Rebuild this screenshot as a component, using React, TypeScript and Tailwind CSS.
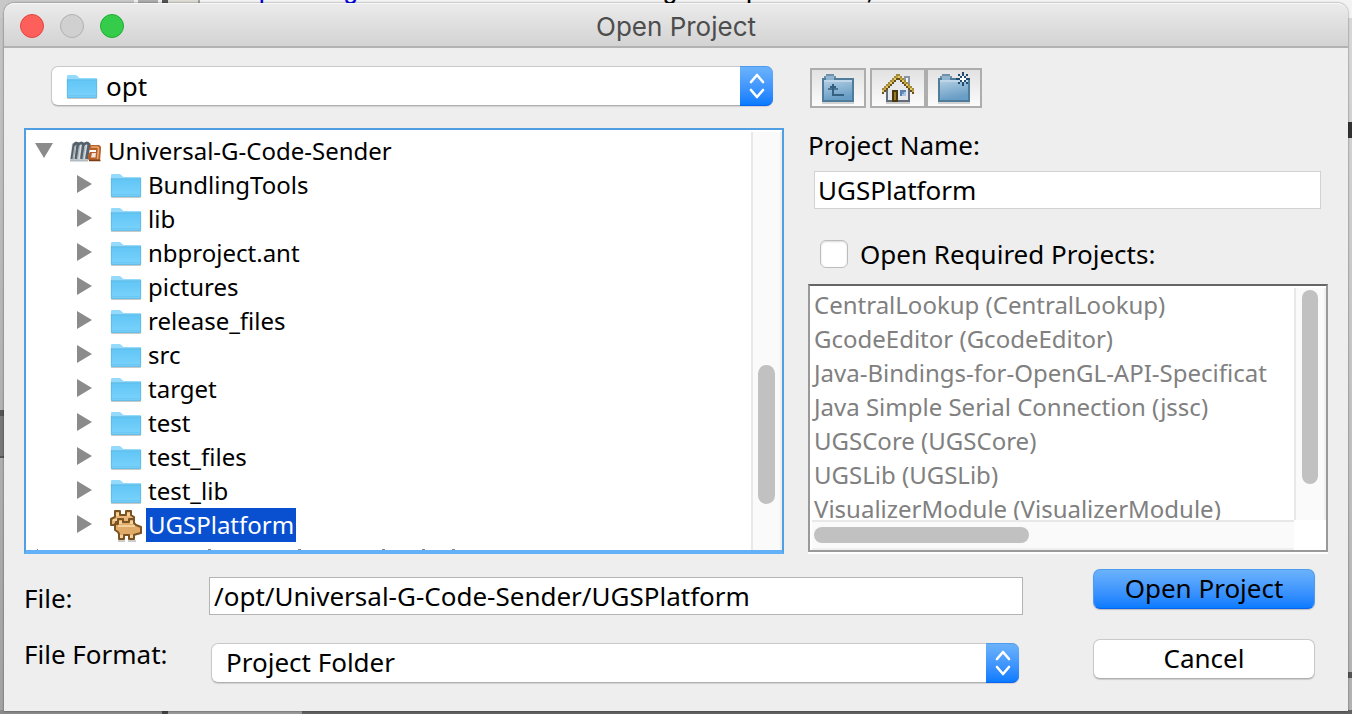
import React from "react";

const folders = [
  "BundlingTools",
  "lib",
  "nbproject.ant",
  "pictures",
  "release_files",
  "src",
  "target",
  "test",
  "test_files",
  "test_lib",
];

const requiredProjects = [
  "CentralLookup (CentralLookup)",
  "GcodeEditor (GcodeEditor)",
  "Java-Bindings-for-OpenGL-API-Specificat",
  "Java Simple Serial Connection (jssc)",
  "UGSCore (UGSCore)",
  "UGSLib (UGSLib)",
  "VisualizerModule (VisualizerModule)",
];

function FolderIcon() {
  return (
    <svg width="32" height="26" viewBox="0 0 32 26" className="block shrink-0 overflow-visible" aria-hidden="true">
      <defs>
        <linearGradient id="folderFront" x1="0" y1="0" x2="0" y2="1">
          <stop offset="0" stopColor="#62c6f5" />
          <stop offset="1" stopColor="#7ad2fc" />
        </linearGradient>
      </defs>
      <rect x="1" y="24.5" width="30" height="1.5" rx="0.75" fill="#c9c9c9" />
      <path d="M1 3.2Q1 2 2.2 2H9.2Q10.2 2 11 2.8L12.8 4.4Q13.4 5 14.4 5H30Q31 5 31 6V24Q31 25 30 25H2Q1 25 1 24Z" fill="#93dafc" />
      <path d="M1 7H31V24Q31 25 30 25H2Q1 25 1 24Z" fill="url(#folderFront)" />
      <path d="M1 6.8H31" stroke="#55b4e0" strokeWidth="0.8" />
      <path d="M1.3 6V24.4H30.7V6" fill="none" stroke="#57b5de" strokeWidth="0.7" />
      <path d="M2 22.6H30" stroke="#64bfe8" strokeWidth="0.6" />
    </svg>
  );
}

function MavenIcon() {
  return (
    <svg width="32" height="22" viewBox="0 0 32 22" className="block shrink-0 overflow-visible" aria-hidden="true">
      <path d="M0 20L2 3H20L18 20Z" fill="#d3d9dd" />
      <path d="M2 19L4 5Q6 2 8 4L6 19M8 5Q11 1.500 13.500 4.500L11.500 19M13.500 5Q16.500 1.500 19 4.500L16.500 19" fill="none" stroke="#55606a" strokeWidth="3" />
      <path d="M3 19L5 6M7.500 19L9.500 6M13 19L15 6" stroke="#aab4bc" strokeWidth="1.300" />
      <path d="M0 20.500H18" stroke="#b3babf" strokeWidth="2" />
      <path d="M20 5H29Q31.500 6 31 9L30 21H20Q17 20 18 15L20 12H26V10H19Z" fill="#b5602a" />
      <path d="M21 7H27.500Q29 8 28.500 10L27.500 19" fill="none" stroke="#eda871" strokeWidth="1.600" />
      <path d="M26 13H22L21 17.500H25.500Z" fill="#f4e3d6" />
      <path d="M19 20.500H30.500" stroke="#7b3c14" strokeWidth="1.500" />
    </svg>
  );
}

function ModuleIcon() {
  return (
    <svg width="32" height="30" viewBox="0 0 32 30" className="block shrink-0 overflow-visible" strokeLinejoin="round" aria-hidden="true">
      <path d="M8 30H15V32H8ZM18 30H26V32H18Z" fill="#cccccc" />
      <path d="M5 1H10V5H16V1H21V5L24 7V12H6V15H1V9L5 7Z" fill="#e6b577" stroke="#7a5320" strokeWidth="2" />
      <path d="M6 3H9V6H6ZM17 3H20V6H17ZM3 9H7V11H3Z" fill="#f4d09b" />
      <path d="M8 9H13V12H19V9H24V13L26 15L31 17V23L27 24L24 25V29H19V25H14V29H9V24L8 22L5 20V14H8Z" fill="#e0ab68" stroke="#7a5320" strokeWidth="2" />
      <path d="M9 11H12V14H9ZM20 11H23V14H20ZM8 15H25V17H8ZM10 25H13V28H10ZM20 25H23V28H20Z" fill="#f4d09b" />
    </svg>
  );
}

function ToolFolder({ children }: { children?: React.ReactNode }) {
  return (
    <svg width="32" height="32" viewBox="0 0 32 32" className="block" shapeRendering="crispEdges" aria-hidden="true">
      <defs>
        <linearGradient id="toolFolder" x1="0" y1="0" x2="0.300" y2="1">
          <stop offset="0" stopColor="#b4cfe4" />
          <stop offset="1" stopColor="#689dc5" />
        </linearGradient>
      </defs>
      <path d="M0 30H32V32H0Z" fill="#d2d2d2" />
      <path d="M2 4H4V2H12V4H14V8H2Z" fill="#6d91ab" />
      <path d="M4 4H12V8H4Z" fill="#93b4cf" />
      <path d="M0 6H32V30H0Z" fill="#4f7c9b" />
      <path d="M2 8H30V28H2Z" fill="url(#toolFolder)" />
      <path d="M4 6H12V8H4Z" fill="#8fb2cd" />
      <path d="M2 8H30V10H2Z" fill="#bfd6e8" />
      {children}
    </svg>
  );
}

function UpIcon() {
  return (
    <ToolFolder>
      <path d="M8 14H14V16H16V18H6V16H8Z" fill="#4a7594" />
      <path d="M10 12H12V14H14V16H12V22H22V24H10V16H8V14H10Z" fill="#36607f" />
    </ToolFolder>
  );
}

function NewFolderIcon() {
  return (
    <ToolFolder>
      <path d="M24 0H26V4H24ZM24 10H26V14H24ZM18 6H22V8H18ZM28 6H32V8H28ZM20 2H22V4H20ZM28 2H30V4H28ZM20 10H22V12H20ZM28 10H30V12H28ZM22 4H24V6H22ZM26 4H28V6H26ZM22 8H24V10H22ZM26 8H28V10H26Z" fill="#234d70" />
      <path d="M24 4H26V6H28V8H26V10H24V8H22V6H24Z" fill="#ffffff" />
    </ToolFolder>
  );
}

const roofColumns = Array.from({ length: 16 }, (_, i) => ({
  x: i * 2,
  y: 2 + 2 * (i < 8 ? 7 - i : i - 8),
  bright: i % 2 === 0,
}));

function HomeIcon() {
  return (
    <svg width="32" height="32" viewBox="0 0 32 32" className="block" shapeRendering="crispEdges" aria-hidden="true">
      <path d="M4 30H28V32H4Z" fill="#cccccc" />
      <path d="M22 4H28V16H22Z" fill="#8a94a2" />
      <path d="M24 6H26V14H24Z" fill="#f6f7f9" />
      <path d="M14 6H18V8H20V10H22V12H24V14H26V16H28V30H4V16H6V14H8V12H10V10H12V8H14Z" fill="#646c7c" />
      <path d="M14 8H18V10H20V12H22V14H24V16H26V28H6V16H8V14H10V12H12V10H14Z" fill="#e6e8ec" />
      {roofColumns.map((c) => (
        <g key={c.x}>
          <rect x={c.x} y={c.y} width="2" height="6" fill="#66511a" />
          <rect x={c.x} y={c.y + 2} width="2" height="2" fill={c.bright ? "#e0cc6c" : "#c3a643"} />
          <rect x={c.x} y={c.y} width="2" height="2" fill="#a38a3a" />
        </g>
      ))}
      <path d="M10 18H16V30H10Z" fill="#4b380c" />
      <path d="M12 20H14V28H12Z" fill="#99792c" />
      <path d="M18 18H24V24H18Z" fill="#5a80ad" />
      <path d="M20 20H24V24H20Z" fill="#a9c6e6" />
      <path d="M20 20H22V22H20Z" fill="#6f97c6" />
    </svg>
  );
}

function Stepper() {
  return (
    <span className="pointer-events-none absolute inset-y-0 right-0 flex w-[33px] items-center justify-center rounded-r-[7px] border-y border-t-[#4f9bee] border-b-[#0a63f0] bg-linear-to-b from-[#6bb2fb] to-[#067bff]">
      <svg width="18" height="28" viewBox="0 0 18 28" fill="none" stroke="#ffffff" strokeWidth="2.600" strokeLinecap="round" strokeLinejoin="round" aria-hidden="true">
        <path d="M3 10L9 3L15 10M3 18L9 25L15 18" />
      </svg>
    </span>
  );
}

function RightTriangle() {
  return (
    <svg width="15" height="20" viewBox="0 0 15 20" className="block shrink-0" aria-hidden="true">
      <path d="M0 0L15 9L0 18Z" fill="#8b8b8b" />
    </svg>
  );
}

const toolButton =
  "flex h-10 w-14 items-center justify-center border-2 border-[#adadad] bg-linear-to-b from-[#e2e2e2] to-[#fbfbfb]";
const selectBox =
  "h-10 w-full appearance-none rounded-[7px] border border-[#c9c9c9] border-b-[#b0b0b0] bg-white text-[26px] shadow-[0_1px_1px_rgba(0,0,0,0.12)] outline-none";

export default function App() {
  return (
    <div className="relative flex h-screen flex-col overflow-hidden bg-[#a8a8a8] px-1 pt-[3px] pb-[3px] font-['Noto_Sans',sans-serif] text-[26px] leading-[34px] text-black">
      <div className="absolute inset-0 flex flex-col justify-between" aria-hidden="true">
        <div className="flex h-[18px] overflow-hidden bg-[#f3f3f3]">
          <div className="w-[134px] bg-[#c8c8c8]" />
          <div className="w-7 border-x-4 border-[#eeeeee] bg-[#adadad]" />
          <div className="w-1.5 bg-[#555555]" />
          <div className="w-8 border-r-2 border-[#a2a2a2] bg-[#dcdcd4]" />
          <div className="-mt-[26px] pl-[58px] font-['Liberation_Mono',monospace] text-[28px] whitespace-nowrap text-black">
            <span className="text-[#0000e6]">package</span> com.willwinder.ugs.nbp.looku;
          </div>
        </div>
        <div className="flex flex-1 justify-between">
          <div className="flex w-1 flex-col justify-end bg-linear-to-b from-[#c4c4c4] to-[#a2a2a2]">
            <div className="mb-[252px] h-12 border-t-[6px] border-b-2 border-[#555555] bg-[#777777]" />
          </div>
          <div className="flex w-1 flex-col justify-end bg-linear-to-b from-[#d8d8d8] to-[#b2b2b2]">
            <div className="mt-[104px] mb-auto h-4 bg-[#333333]" />
            <div className="mb-8 h-[6px] bg-[#555555]" />
          </div>
        </div>
        <div className="flex h-1">
          <div className="w-[162px] bg-[#8a8a8a]" />
          <div className="w-[140px] border-l-[6px] border-[#444444] bg-[#999999]" />
          <div className="flex-1 bg-[#626262]" />
        </div>
      </div>

      <main className="relative flex min-h-0 flex-1 flex-col rounded-t-[10px] bg-[#eeeeee] shadow-[0_0_2px_rgba(0,0,0,0.6)]">
        <header className="relative flex h-[45px] shrink-0 items-center justify-center rounded-t-[10px] border-t border-b-2 border-t-[#f7f7f7] border-b-[#b2b2b2] bg-linear-to-b from-[#ebebeb] to-[#d3d3d3]">
          <div className="absolute inset-y-0 left-4 flex items-center gap-4 pt-0.5">
            <button aria-label="Close" className="size-6 rounded-full border border-[#e2463f] bg-[#fd605b]" />
            <button aria-label="Minimize" className="size-6 rounded-full border border-[#b1b1b1] bg-[#d0d0d0]" />
            <button aria-label="Zoom" className="size-6 rounded-full border border-[#1fae30] bg-[#35cc4b]" />
          </div>
          <h1 className="pt-1 font-['Inter',sans-serif] text-[26px] text-[#4d4d4d]">Open Project</h1>
        </header>

        <div className="flex min-h-0 flex-1 flex-col px-5 pt-[18px] pb-7">
          <div className="grid min-h-0 flex-1 grid-cols-[minmax(0,1fr)_520px] gap-6">
            <section className="flex min-h-0 flex-col">
              <div className="relative mr-[11px] mb-[22px] ml-[27px]">
                <select aria-label="Folder" className={selectBox + " pl-[54px]"}>
                  <option>opt</option>
                </select>
                <span className="pointer-events-none absolute inset-y-0 left-[15px] flex items-center">
                  <FolderIcon />
                </span>
                <Stepper />
              </div>

              <div className="flex min-h-0 flex-1 border-2 border-b-4 border-[#4f9fe2] border-b-[#62b0f5] bg-white">
                <ul className="min-w-0 flex-1 overflow-hidden pt-1 text-2xl leading-[34px]">
                  <li className="flex h-[34px] items-center pl-[9px]">
                    <svg width="18" height="16" viewBox="0 0 18 16" className="block" aria-hidden="true">
                      <path d="M0 0H18L9 15Z" fill="#8b8b8b" />
                    </svg>
                    <span className="ml-[17px]">
                      <MavenIcon />
                    </span>
                    <span className="ml-1 px-0.5">Universal-G-Code-Sender</span>
                  </li>
                  {folders.map((name) => (
                    <li key={name} className="flex h-[34px] items-center pl-[51px]">
                      <RightTriangle />
                      <span className="ml-[18px]">
                        <FolderIcon />
                      </span>
                      <span className="ml-1 px-0.5">{name}</span>
                    </li>
                  ))}
                  <li className="flex h-[34px] items-center pl-[51px]">
                    <RightTriangle />
                    <span className="ml-[18px]">
                      <ModuleIcon />
                    </span>
                    <span className="ml-1 bg-[#0850d0] px-0.5 text-white">UGSPlatform</span>
                  </li>
                  <li className="h-[34px] pt-[7px]">
                    <svg width="440" height="1" viewBox="0 0 440 1" className="block" aria-hidden="true">
                      <path d="M11 0H12V1H11ZM182 0H185V1H182ZM272 0H275V1H272ZM356 0H359V1H356ZM396 0H399V1H396ZM426 0H429V1H426Z" fill="#888888" />
                    </svg>
                  </li>
                </ul>
                <div className="mt-0.5 flex w-[31px] flex-col justify-end border-x-2 border-l-[#e8e8e8] border-r-[#efefef] bg-[#fafafa] px-[5px] pb-[46px]">
                  <div className="h-[139px] rounded-full bg-[#c1c1c1]" />
                </div>
              </div>
            </section>

            <section className="flex min-h-0 flex-col">
              <div className="ml-0.5 flex pt-0.5">
                <button aria-label="Up One Level" className={toolButton + " mr-1"}>
                  <UpIcon />
                </button>
                <button aria-label="Home" className={toolButton}>
                  <HomeIcon />
                </button>
                <button aria-label="New Folder" className={toolButton}>
                  <NewFolderIcon />
                </button>
              </div>
              <label htmlFor="project-name" className="mt-5">
                Project Name:
              </label>
              <input
                id="project-name"
                defaultValue="UGSPlatform"
                className="mt-[9px] mr-[7px] ml-1.5 h-[38px] border border-[#d2d2d2] bg-white px-[3px] outline-none"
              />
              <label className="mt-7 ml-3 flex items-center gap-3">
                <input
                  type="checkbox"
                  className="size-7 appearance-none rounded-[6px] border border-[#bcbcbc] bg-white shadow-[inset_0_1px_2px_rgba(0,0,0,0.15)]"
                />
                Open Required Projects:
              </label>
              <div className="mt-[13px] mb-0.5 flex min-h-0 flex-1 flex-col border-2 border-[#999999] border-t-[#666666] bg-white shadow-[0_2px_0_#ffffff]">
                <div className="flex min-h-0 flex-1">
                  <ul className="min-w-0 flex-1 overflow-hidden pt-0.5 pl-1 text-2xl leading-[34px] whitespace-nowrap text-[#808080]">
                    {requiredProjects.map((name) => (
                      <li key={name}>{name}</li>
                    ))}
                  </ul>
                  <div className="mt-0.5 w-8 border-x-2 border-l-[#e8e8e8] border-r-[#efefef] bg-[#fafafa] px-1.5 pt-0.5">
                    <div className="h-[194px] rounded-full bg-[#c1c1c1]" />
                  </div>
                </div>
                <div className="mr-8 ml-0.5 flex h-[30px] items-center border-y-2 border-t-[#e8e8e8] border-b-[#efefef] bg-[#fafafa] pl-0.5">
                  <div className="h-4 w-[215px] rounded-full bg-[#c1c1c1]" />
                </div>
              </div>
            </section>
          </div>

          <div className="mt-[15px] grid grid-cols-[185px_minmax(0,1fr)_222px] items-start pr-[13px]">
            <label htmlFor="file-path" className="pt-3">
              File:
            </label>
            <input
              id="file-path"
              defaultValue="/opt/Universal-G-Code-Sender/UGSPlatform"
              className="mt-2 mr-[70px] h-[38px] border border-[#b4b4b4] bg-white px-1 outline-none"
            />
            <button className="h-10 rounded-[7px] border border-[#4f9bee] border-b-[#0a63f0] bg-linear-to-b from-[#6bb2fb] to-[#067bff] pb-0.5 shadow-[0_1px_1px_rgba(0,0,0,0.2)]">
              Open Project
            </button>
          </div>
          <div className="mt-5 grid grid-cols-[185px_minmax(0,1fr)_222px] items-start pr-[13px]">
            <label htmlFor="file-format" className="pt-0.5">
              File Format:
            </label>
            <div className="relative mt-2 mr-[74px] ml-0.5">
              <select id="file-format" className={selectBox + " pb-0.5 pl-3.5"}>
                <option>Project Folder</option>
              </select>
              <Stepper />
            </div>
            <button className="mt-1 h-10 rounded-[7px] border border-[#c9c9c9] border-b-[#b0b0b0] bg-white pb-0.5 shadow-[0_1px_1px_rgba(0,0,0,0.15)]">
              Cancel
            </button>
          </div>
        </div>
      </main>
    </div>
  );
}
